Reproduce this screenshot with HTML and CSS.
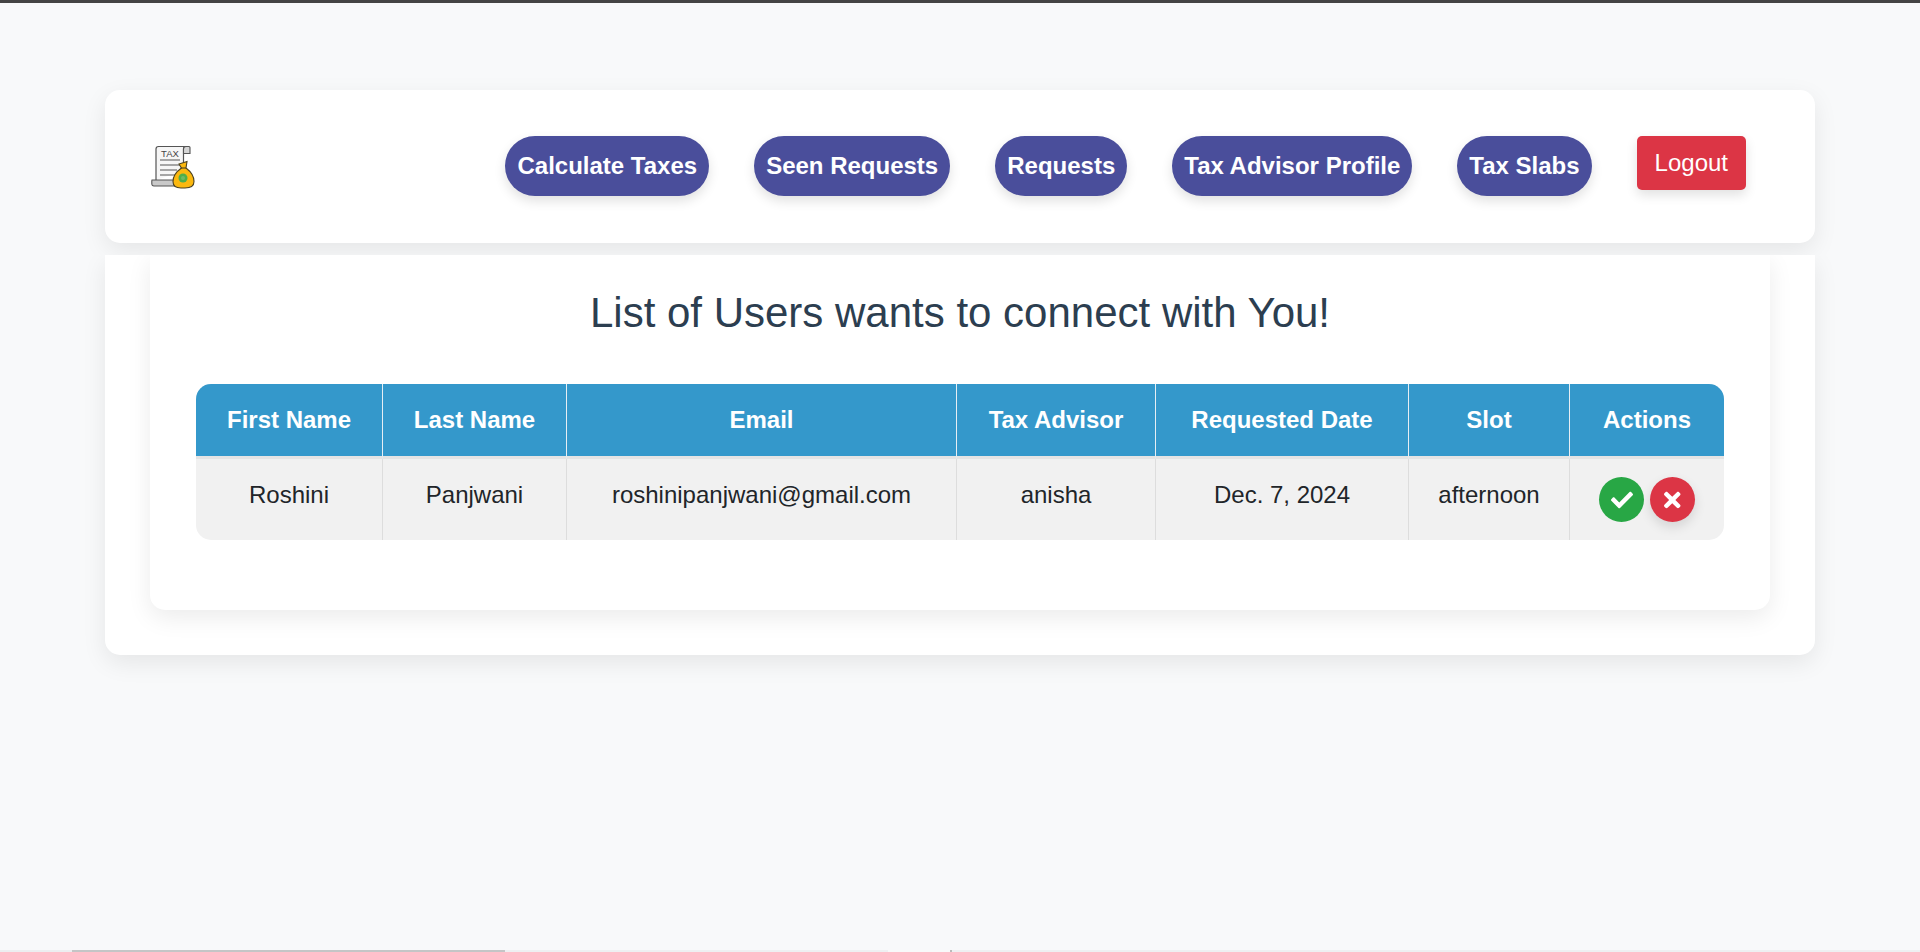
FILE: index.html
```html
<!DOCTYPE html>
<html lang="en">
<head>
<meta charset="utf-8">
<title>Requests</title>
<link rel="stylesheet" href="styles.css">
</head>
<body>
<div class="topline"></div>
<div class="page">
  <header class="head">
    <nav class="navcard">
      <svg class="logo" viewBox="0 0 46 46" width="46" height="46" aria-hidden="true">
        <path d="M5 35V4Q5 1.500 7.500 1.500H35Q32.500 1.500 32.500 4V26" fill="#f6f6f6" stroke="#555" stroke-width="1.200"/>
        <path d="M35 1.500H38Q39 1.500 39 2.500V8.500H32.500V4Q32.500 1.500 35 1.500Z" fill="#d5d5d5" stroke="#555" stroke-width="1.100"/>
        <path d="M1 35H24V41H3Q.8 41 .8 38.500V36Z" fill="#c9c9c9" stroke="#555" stroke-width="1.100"/>
        <text x="19" y="11.500" class="logotext">TAX</text>
        <path d="M9 15H29M9 20H29M9 25H26M9 30H24" stroke="#555" stroke-width="1.200" fill="none"/>
        <path d="M28 19L36 16.500L35 23Q43 29 43 36.500Q43 43 34 43H30Q22 43 22 36.500Q22 29 30.500 23Z" fill="#fbb80f" stroke="#4c4220" stroke-width="1.100"/>
        <path d="M29.500 23H35" stroke="#4c4220" stroke-width="1.100"/>
        <circle cx="32" cy="33" r="4.500" fill="#4fae4a"/>
        <circle cx="32" cy="33" r="2" fill="#6dbb66"/>
      </svg>
      <div class="links">
        <a class="pill" href="#">Calculate Taxes</a>
        <a class="pill" href="#">Seen Requests</a>
        <a class="pill" href="#">Requests</a>
        <a class="pill" href="#">Tax Advisor Profile</a>
        <a class="pill" href="#">Tax Slabs</a>
        <a class="logout" href="#">Logout</a>
      </div>
    </nav>
  </header>
  <main class="outer">
    <section class="inner">
      <h1 class="title">List of Users wants to connect with You!</h1>
      <table class="grid">
        <thead>
          <tr>
            <th class="c1">First Name</th>
            <th class="c2">Last Name</th>
            <th class="c3">Email</th>
            <th class="c4">Tax Advisor</th>
            <th class="c5">Requested Date</th>
            <th class="c6">Slot</th>
            <th class="c7">Actions</th>
          </tr>
        </thead>
        <tbody>
          <tr>
            <td>Roshini</td>
            <td>Panjwani</td>
            <td>roshinipanjwani@gmail.com</td>
            <td>anisha</td>
            <td>Dec. 7, 2024</td>
            <td>afternoon</td>
            <td class="acts">
              <div class="actrow">
                <button class="round ok" type="button" aria-label="Accept">
                  <svg viewBox="0 0 512 512" width="22" height="22"><path fill="#fff" d="M173.898 439.404l-166.4-166.4c-9.997-9.997-9.997-26.206 0-36.204l36.203-36.204c9.997-9.998 26.207-9.998 36.204 0L192 312.69 432.095 72.596c9.997-9.997 26.207-9.997 36.204 0l36.203 36.204c9.997 9.997 9.997 26.206 0 36.204l-294.4 294.401c-9.998 9.997-26.207 9.997-36.204-.001z"/></svg>
                </button>
                <button class="round no" type="button" aria-label="Reject">
                  <svg viewBox="0 0 352 512" width="16.500" height="24"><path fill="#fff" d="M242.72 256l100.07-100.07c12.28-12.28 12.28-32.19 0-44.48l-22.24-22.24c-12.28-12.28-32.19-12.28-44.48 0L176 189.28 75.93 89.21c-12.28-12.28-32.19-12.28-44.48 0L9.21 111.45c-12.28 12.28-12.28 32.19 0 44.48L109.28 256 9.21 356.07c-12.28 12.28-12.28 32.19 0 44.48l22.24 22.24c12.28 12.28 32.2 12.28 44.48 0L176 322.72l100.07 100.07c12.28 12.28 32.2 12.28 44.48 0l22.24-22.24c12.28-12.28 12.28-32.19 0-44.48L242.72 256z"/></svg>
                </button>
              </div>
            </td>
          </tr>
        </tbody>
      </table>
    </section>
  </main>
</div>
<div class="hscroll"><span class="sc-a"></span><span class="sc-thumb"></span><span class="sc-b"></span><span class="sc-c"></span><span class="sc-d"></span><span class="sc-e"></span></div>
</body>
</html>
```

FILE: styles.css
```css
* { box-sizing: border-box; }
html, body { margin: 0; height: 952px; overflow: hidden; }
body {
  background: #f8f9fa;
  font-family: "Liberation Sans", Arial, sans-serif;
  color: #212529;
  display: flex;
  flex-direction: column;
}
.topline { height: 3px; background: #444; flex: none; }
.page { flex: 1; }
.head {
  background: #f8f9fa;
  padding: 87px 105px 12px;
  position: relative;
  z-index: 2;
  overflow: hidden;
}
.navcard {
  height: 153px;
  background: #fff;
  border-radius: 15px;
  box-shadow: 0 8px 24px rgba(0, 0, 0, .08);
  display: flex;
  align-items: flex-start;
  padding: 46px 69px 0 46px;
}
.logo { margin-top: 9px; flex: none; }
.links { margin-left: auto; display: flex; gap: 45px; align-items: flex-start; }
.pill {
  display: block;
  height: 60px;
  line-height: 60px;
  padding: 0 12px;
  border-radius: 30px;
  background: #4a4e9b;
  color: #fff;
  font-size: 24px;
  font-weight: 700;
  text-decoration: none;
  box-shadow: 0 5px 12px rgba(0, 0, 0, .12);
}
.logout {
  display: block;
  height: 54px;
  line-height: 54px;
  padding: 0 18px;
  border-radius: 5px;
  background: #dc3545;
  color: #fff;
  font-size: 24px;
  text-decoration: none;
  box-shadow: 0 5px 12px rgba(0, 0, 0, .12);
}
.outer {
  margin: 0 105px;
  background: #fff;
  border-radius: 0 0 15px 15px;
  box-shadow: 0 8px 24px rgba(0, 0, 0, .08);
  padding: 0 45px 45px;
}
.inner {
  height: 355px;
  background: #fff;
  border-radius: 0 0 15px 15px;
  box-shadow: 0 8px 24px rgba(0, 0, 0, .08);
  padding: 31px 46px 0;
}
.title {
  margin: 0 0 45px;
  height: 53px;
  line-height: 53px;
  text-align: center;
  font-size: 42px;
  font-weight: 400;
  color: #2c3e50;
}
.grid {
  width: 100%;
  border-collapse: separate;
  border-spacing: 0;
  table-layout: fixed;
  border-radius: 15px;
  overflow: hidden;
  background: #f1f1f1;
}
.grid th {
  height: 75px;
  background: #3498cb;
  background-clip: padding-box;
  color: #fff;
  font-size: 24px;
  font-weight: 700;
  text-align: center;
  border-bottom: 3px solid #e4e4e4;
  border-right: 1px solid #e6eef4;
}
.grid td {
  height: 81px;
  padding: 0 0 10px;
  font-size: 24px;
  text-align: center;
  vertical-align: middle;
  border-right: 1px solid #ddd;
}
.grid th:last-child, .grid td:last-child { border-right: 0; }
.c1 { width: 187px; }
.c2 { width: 184px; }
.c3 { width: 390px; }
.c4 { width: 199px; }
.c5 { width: 253px; }
.c6 { width: 161px; }
.grid td.acts { padding: 0; }
.actrow { display: flex; justify-content: center; gap: 6px; }
.round {
  width: 45px;
  height: 45px;
  padding: 0;
  border: 0;
  border-radius: 50%;
  display: flex;
  align-items: center;
  justify-content: center;
}
.ok { background: #28a745; }
.no { background: #dc3545; box-shadow: 0 5px 12px rgba(0, 0, 0, .12); }
.logotext { font-size: 9.500px; text-anchor: middle; fill: #444; font-family: "Liberation Sans", Arial, sans-serif; }
.hscroll { height: 2px; flex: none; display: flex; background: #eef0f2; }
.hscroll span { display: block; height: 2px; }
.sc-a { width: 72px; background: #eceef0; }
.sc-thumb { width: 433px; background: #c4c5c6; }
.sc-b { width: 383px; background: #eef0f2; }
.sc-c { width: 62px; background: #f8f9fa; }
.sc-d { width: 2px; background: #bbb; }
.sc-e { flex: 1; background: #eef0f2; }
```
